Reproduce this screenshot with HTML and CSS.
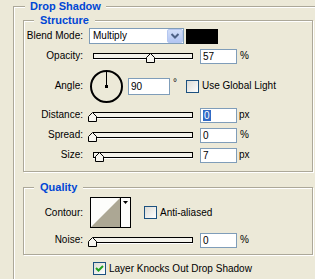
FILE: index.html
```html
<!DOCTYPE html>
<html>
<head>
<meta charset="utf-8">
<link rel="stylesheet" href="styles.css">
</head>
<body>
<fieldset class="group outer">
  <legend class="title">Drop Shadow</legend>

  <fieldset class="group sub structure">
    <legend class="title">Structure</legend>

    <div class="row row-blend">
      <span class="label">Blend Mode:</span>
      <div class="select">
        <span class="select-text">Multiply</span>
        <span class="select-btn">
          <svg width="16" height="14" viewBox="0 0 16 14"><path d="M4.5 5 L8 8.5 L11.5 5" fill="none" stroke="#4d6185" stroke-width="2"/></svg>
        </span>
      </div>
      <span class="swatch"></span>
    </div>

    <div class="row row-slider first">
      <span class="label">Opacity:</span>
      <div class="slider">
        <svg class="thumb" style="left:52px" width="9" height="10" viewBox="0 0 9 10"><path d="M0.5 9.5 V4.5 L4.5 0.5 L8.5 4.5 V9.5 Z" fill="#f6f5ef" stroke="#000"/></svg>
      </div>
      <div class="field">57</div>
      <span class="unit">%</span>
    </div>

    <div class="row row-angle">
      <span class="label">Angle:</span>
      <svg class="dial" width="33" height="33" viewBox="0 0 33 33">
        <circle cx="16.5" cy="16.5" r="15.5" fill="none" stroke="#000" stroke-width="2"/>
        <line x1="16.5" y1="16.5" x2="16.5" y2="2" stroke="#000" stroke-width="1"/>
        <rect x="15" y="15" width="3" height="3" fill="#000"/>
      </svg>
      <div class="field field-angle">90</div>
      <span class="degree">°</span>
      <span class="check check-global"></span>
      <span class="check-label">Use Global Light</span>
    </div>

    <div class="row row-slider">
      <span class="label">Distance:</span>
      <div class="slider">
        <svg class="thumb" style="left:-6px" width="9" height="10" viewBox="0 0 9 10"><path d="M0.5 9.5 V4.5 L4.5 0.5 L8.5 4.5 V9.5 Z" fill="#f6f5ef" stroke="#000"/></svg>
      </div>
      <div class="field"><span class="selected">0</span></div>
      <span class="unit unit-px">px</span>
    </div>

    <div class="row row-slider">
      <span class="label">Spread:</span>
      <div class="slider">
        <svg class="thumb" style="left:-6px" width="9" height="10" viewBox="0 0 9 10"><path d="M0.5 9.5 V4.5 L4.5 0.5 L8.5 4.5 V9.5 Z" fill="#f6f5ef" stroke="#000"/></svg>
      </div>
      <div class="field">0</div>
      <span class="unit">%</span>
    </div>

    <div class="row row-slider">
      <span class="label">Size:</span>
      <div class="slider">
        <svg class="thumb" style="left:1px" width="9" height="10" viewBox="0 0 9 10"><path d="M0.5 9.5 V4.5 L4.5 0.5 L8.5 4.5 V9.5 Z" fill="#f6f5ef" stroke="#000"/></svg>
      </div>
      <div class="field">7</div>
      <span class="unit unit-px">px</span>
    </div>
  </fieldset>

  <fieldset class="group sub quality">
    <legend class="title">Quality</legend>

    <div class="row row-contour">
      <span class="label">Contour:</span>
      <svg class="contour" width="41" height="31" viewBox="0 0 41 31">
        <rect x="0.5" y="0.5" width="40" height="30" fill="#fdfdfb" stroke="#000"/>
        <polygon points="1,30 30,1 30,30" fill="#aca794"/>
        <line x1="30.5" y1="1" x2="30.5" y2="30" stroke="#000"/>
        <polygon points="33,4 38,4 35.5,7" fill="#000"/>
      </svg>
      <span class="check check-anti"></span>
      <span class="check-label">Anti-aliased</span>
    </div>

    <div class="row row-slider">
      <span class="label">Noise:</span>
      <div class="slider">
        <svg class="thumb" style="left:-6px" width="9" height="10" viewBox="0 0 9 10"><path d="M0.5 9.5 V4.5 L4.5 0.5 L8.5 4.5 V9.5 Z" fill="#f6f5ef" stroke="#000"/></svg>
      </div>
      <div class="field">0</div>
      <span class="unit">%</span>
    </div>
  </fieldset>

  <div class="row row-knock">
    <span class="check checked">
      <svg width="11" height="11" viewBox="0 0 11 11"><path d="M2 5 L4.5 7.5 L9 3" fill="none" stroke="#21a121" stroke-width="2"/></svg>
    </span>
    <span class="check-label">Layer Knocks Out Drop Shadow</span>
  </div>
</fieldset>
</body>
</html>
```

FILE: styles.css
```css
html, body {
  margin: 0;
  padding: 0;
}

body {
  width: 315px;
  height: 279px;
  overflow: hidden;
  background: #ece9d8;
  color: #000;
  font: 10px/12px "Liberation Sans", Arial, sans-serif;
}

.group {
  margin: 0;
  padding: 0;
  min-width: 0;
  border: 1px solid #aca899;
  box-shadow: inset 1px 1px 0 #fff, 1px 1px 0 #fff;
}

.title {
  margin-left: 2px;
  padding: 0 5px;
  background: #ece9d8;
  color: #0046d5;
  font: bold 11px/12px "Liberation Sans", Arial, sans-serif;
}

.outer {
  margin-left: 13px;
  width: 302px;
  box-sizing: border-box;
  padding: 2px 0 0 9px;
  border-right: 0;
  border-bottom: 0;
  box-shadow: inset 1px 1px 0 #fff;
}

.sub {
  width: 290px;
  box-sizing: border-box;
  padding: 0 0 8px 0;
}

.sub > .title {
  margin-left: 10px;
  padding: 0 6px;
}

.quality {
  margin-top: 9px;
  padding-bottom: 6px;
}

.row {
  display: flex;
  align-items: center;
  height: 16px;
  margin-top: 4px;
}

.row-blend {
  margin-top: 2px;
}

.label {
  flex: none;
  width: 59px;
  text-align: right;
}

.select {
  display: flex;
  align-items: center;
  margin-left: 6px;
  width: 95px;
  height: 16px;
  box-sizing: border-box;
  border: 1px solid #7f9db9;
  background: #fff;
}

.select-text {
  padding-left: 3px;
}

.select-btn {
  margin-left: auto;
  width: 16px;
  height: 14px;
  box-sizing: border-box;
  border: 1px solid #b5c7f0;
  border-radius: 2px;
  background: linear-gradient(#d2def9, #b3c6f3);
  display: flex;
}

.select-btn svg {
  margin: -1px;
}

.swatch {
  margin-left: 2px;
  width: 32px;
  height: 15px;
  background: #000;
}

.slider {
  position: relative;
  flex: none;
  margin-left: 10px;
  width: 100px;
  height: 6px;
  box-sizing: border-box;
  border: 1px solid #000;
  background: #f4f3ec;
  box-shadow: 0 1px 0 #fff;
}

.thumb {
  position: absolute;
  top: -1px;
  display: block;
}

.field {
  flex: none;
  margin-left: 7px;
  width: 37px;
  height: 15px;
  box-sizing: border-box;
  border: 1px solid #7f9db9;
  background: #fff;
  padding-left: 2px;
  line-height: 13px;
}

.selected {
  display: inline-block;
  background: #316ac5;
  color: #fff;
  padding: 0 1px;
  line-height: 11px;
}

.unit {
  margin-left: 3px;
}

.unit-px {
  margin-left: 2px;
}

.row-angle {
  height: 34px;
  margin-top: 5px;
}

.dial {
  flex: none;
  margin-left: 7px;
  display: block;
}

.field-angle {
  margin-left: 5px;
  width: 42px;
  height: 17px;
  line-height: 15px;
}

.degree {
  align-self: flex-start;
  margin-top: 8px;
  margin-left: 3px;
}

.check {
  flex: none;
  width: 13px;
  height: 13px;
  box-sizing: border-box;
  border: 1px solid #1c5180;
  background: linear-gradient(135deg, #dcdbd5, #fff);
  display: flex;
}

.check-global {
  margin-left: 9px;
}

.check-label {
  margin-left: 3px;
  white-space: nowrap;
}

.row-contour {
  height: 31px;
  margin-top: 4px;
}

.contour {
  flex: none;
  display: block;
  margin-left: 7px;
}

.check-anti {
  margin-left: 13px;
}

.row-knock {
  margin-top: 7px;
  margin-bottom: 4px;
  margin-left: 70px;
  height: 13px;
}
```
